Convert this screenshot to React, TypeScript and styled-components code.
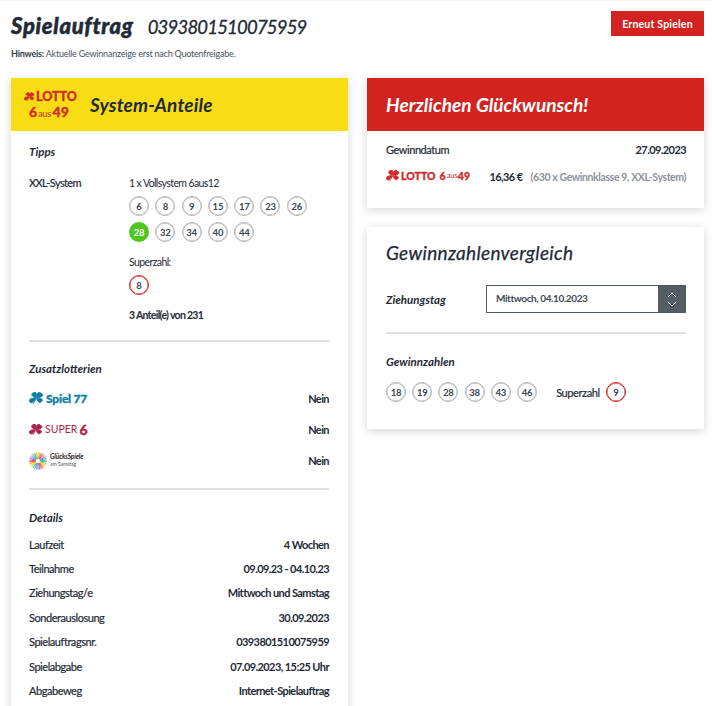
import React from "react";
import styled, { createGlobalStyle } from "styled-components";

const Global = createGlobalStyle`
  html, body { margin: 0; padding: 0; height: 706px; overflow: hidden; background: #fff; }
  body { font-family: "Lato", "Open Sans", sans-serif; color: #1f2a36; font-size: 11px; }
`;

const Page = styled.div`
  padding: 11px 8px 0 11px;
  box-shadow: inset 0 2px 2px -1px rgba(0, 0, 0, 0.05);
  height: 706px;
  box-sizing: border-box;
`;
const TopBar = styled.div`
  display: flex;
  justify-content: space-between;
  align-items: flex-start;
  height: 34px;
`;
const Title = styled.h1`
  margin: 0;
  font-size: 20px;
  line-height: 29px;
  font-style: italic;
  font-weight: 400;
  display: flex;
  gap: 14px;
  align-items: baseline;
  color: #1f2a36;
`;
const TitleStrong = styled.strong`
  font-weight: 900;
  font-size: 22px;
  letter-spacing: 0.7px;
  -webkit-text-stroke: 0.5px currentColor;
`;
const TitleNumber = styled.span`
  font-size: 18.5px;
  letter-spacing: -0.8px;
  -webkit-text-stroke: 0.3px currentColor;
`;
const RedButton = styled.button`
  width: 93px;
  height: 25px;
  border: 0;
  padding: 0;
  background: #d22320;
  color: #fff;
  font: 700 10.5px "Lato", sans-serif;
  letter-spacing: 0.2px;
`;
const Hint = styled.p`
  margin: 0;
  font-size: 9px;
  letter-spacing: -0.22px;
  line-height: 18px;
  color: #4a5560;
  height: 33px;
  b { font-weight: 700; color: #333e49; }
`;
const Columns = styled.div`
  display: grid;
  grid-template-columns: 337px 337px;
  column-gap: 19px;
  align-items: start;
`;
const Column = styled.div`
  display: flex;
  flex-direction: column;
  gap: 19px;
`;
const Card = styled.section`
  background: #fff;
  box-shadow: 0 2px 9px rgba(0, 0, 0, 0.17);
`;
const Banner = styled.header<{ $bg: string; $fg: string; $left: number }>`
  height: 53px;
  background: ${(p) => p.$bg};
  color: ${(p) => p.$fg};
  display: flex;
  align-items: center;
  padding: 0 19px 0 ${(p) => p.$left}px;
  box-sizing: border-box;
`;
const BannerTitle = styled.h2<{ $gap?: number; $spacing?: number }>`
  margin: 0 0 0 ${(p) => p.$gap ?? 0}px;
  font-size: 19px;
  font-style: italic;
  font-weight: 700;
  letter-spacing: ${(p) => p.$spacing ?? 0}px;
`;
const Body = styled.div<{ $left: number; $right: number; $bottom: number }>`
  padding: 0 ${(p) => p.$right}px ${(p) => p.$bottom}px ${(p) => p.$left}px;
`;
const Sub = styled.h3<{ $top: number; $bottom: number }>`
  margin: ${(p) => p.$top}px 0 ${(p) => p.$bottom}px;
  font-size: 11.5px;
  line-height: 16px;
  font-style: italic;
  font-weight: 700;
`;
const Tip = styled.div`
  display: grid;
  grid-template-columns: 100px 1fr;
`;
const Label = styled.div`
  font-size: 11px;
  line-height: 16px;
  letter-spacing: -0.6px;
  -webkit-text-stroke: 0.2px currentColor;
`;
const Plain = styled.div<{ $top?: number; $bottom?: number }>`
  font-size: 10.5px;
  line-height: 16px;
  letter-spacing: -0.6px;
  margin: ${(p) => p.$top ?? 0}px 0 ${(p) => p.$bottom ?? 0}px;
`;
const Shares = styled.div`
  font-size: 10.5px;
  line-height: 16px;
  letter-spacing: -0.7px;
  font-weight: 700;
  margin-top: 12px;
`;
const BallGrid = styled.div`
  display: grid;
  grid-template-columns: repeat(7, 20px);
  column-gap: 6.3px;
  row-gap: 6px;
`;
const Ball = styled.span<{ $kind?: "red" | "hit" }>`
  width: 20px;
  height: 20px;
  box-sizing: border-box;
  border-radius: 50%;
  display: inline-flex;
  align-items: center;
  justify-content: center;
  font-size: 9.5px;
  font-weight: 700;
  letter-spacing: -0.2px;
  color: ${(p) => (p.$kind === "hit" ? "#fff" : "#3a4550")};
  background: ${(p) => (p.$kind === "hit" ? "#4fc81e" : "#fff")};
  border: ${(p) =>
    p.$kind === "hit" ? "0" : p.$kind === "red" ? "1px solid #d22320" : "1px solid #b4b4b4"};
  box-shadow: ${(p) =>
    p.$kind === "hit"
      ? "none"
      : p.$kind === "red"
        ? "inset 0 0 0 0.4px #d22320"
        : "inset 0 0 0 0.4px #b4b4b4"};
`;
const Divider = styled.hr<{ $top: number; $bottom?: number }>`
  border: 0;
  height: 2px;
  background: #e0e0e0;
  margin: ${(p) => p.$top}px 0 ${(p) => p.$bottom ?? 0}px;
`;
const LotteryRow = styled.div`
  height: 31px;
  display: flex;
  align-items: center;
  justify-content: space-between;
`;
const Strong = styled.span`
  font-weight: 700;
  font-size: 11px;
  letter-spacing: -0.58px;
`;
const Detail = styled.div`
  height: 24.4px;
  display: flex;
  align-items: center;
  justify-content: space-between;
  font-size: 11px;
`;
const DetailLabel = styled.span`
  letter-spacing: -0.45px;
  -webkit-text-stroke: 0.2px currentColor;
`;
const WinRow = styled.div`
  display: flex;
  justify-content: space-between;
  align-items: center;
  margin-top: 10px;
  height: 16px;
`;
const WinAmount = styled.div`
  display: flex;
  align-items: center;
  justify-content: space-between;
  margin-top: 11px;
  height: 16px;
`;
const Grey = styled.span`
  color: #8c929a;
  font-weight: 700;
  font-size: 10.5px;
  letter-spacing: -0.4px;
  margin-left: 8px;
`;
const CompareTitle = styled.h2`
  margin: 0;
  padding-top: 13px;
  font-size: 19px;
  line-height: 26px;
  font-style: italic;
  font-weight: 400;
  letter-spacing: 0.3px;
  -webkit-text-stroke: 0.25px currentColor;
`;
const DayRow = styled.div`
  display: grid;
  grid-template-columns: 100px 200px;
  align-items: center;
  margin-top: 19px;
`;
const DaySub = styled(Sub)`
  padding-top: 2px;
`;
const Select = styled.div`
  height: 28px;
  box-sizing: border-box;
  border: 1px solid #4f5960;
  display: flex;
  align-items: stretch;
  justify-content: space-between;
  font-size: 10px;
  letter-spacing: -0.4px;
  font-weight: 700;
  color: #404a54;
`;
const SelectText = styled.span`
  padding: 0 0 2px 9px;
  display: flex;
  align-items: center;
`;
const SelectBtn = styled.span`
  width: 27px;
  background: #555e64;
  display: flex;
  align-items: center;
  justify-content: center;
`;
const NumbersRow = styled.div`
  display: flex;
  align-items: center;
  gap: 6.2px;
`;
const SuperLabel = styled.span`
  font-size: 11px;
  letter-spacing: -0.4px;
  margin: 0 0 0 13px;
  -webkit-text-stroke: 0.2px currentColor;
`;

const LogoInline = styled.span<{ $color: string }>`
  display: inline-flex;
  align-items: center;
  color: ${(p) => p.$color};
`;
const Word = styled.span<{ $size: number; $weight?: number; $gap?: number; $spacing?: number }>`
  font-size: ${(p) => p.$size}px;
  font-weight: ${(p) => p.$weight ?? 900};
  margin-left: ${(p) => p.$gap ?? 0}px;
  letter-spacing: ${(p) => p.$spacing ?? 0}px;
  line-height: 1;
  -webkit-text-stroke: ${(p) => ((p.$weight ?? 900) === 900 ? "0.3px currentColor" : "0")};
`;
const LottoStack = styled.div`
  width: 53px;
  color: #d22b2b;
  flex: none;
`;
const StackTop = styled.div`
  display: flex;
  align-items: center;
  height: 13px;
`;
const StackBottom = styled.div`
  display: flex;
  align-items: baseline;
  padding-left: 5px;
  line-height: 15px;
  margin-top: 1px;
`;
const GsText = styled.div`
  margin-left: 3px;
  color: #222;
  line-height: 1;
`;
const GsTop = styled.div`
  font-size: 6.5px;
  font-style: italic;
  font-weight: 700;
  letter-spacing: -0.1px;
`;
const GsBottom = styled.div`
  font-size: 5px;
  margin-top: 2px;
  color: #555;
`;

const Clover = ({ w, color }: { w: number; color: string }) => (
  <svg width={w} height={w * 0.85} viewBox="0 0 20 17" fill={color} stroke={color} strokeWidth="1.3" strokeLinejoin="round" aria-hidden="true">
    <path d="M10.2 7.2C9.6 4.6 10.8 1.2 13.2.6c1.6-.4 2.6.5 2.9 1.600 1.500-.1 2.700.9 2.200 2.400-.7 2-4.800 2.900-8.100 2.600Z" />
    <path d="M9.200 7.200C6.400 7 3.600 5.400 3.800 3c.1-1.300 1.300-1.900 2.300-1.800C6.600.1 8 -.3 9 .8c1.300 1.500.8 4.200.2 6.400Z" />
    <path d="M8.700 8.200C6.400 8 2.600 8.300 1 10.200c-1 1.200-.8 2.500.3 3 .3 1 1.700 1.500 2.900.7C6.300 12.600 7.900 10.400 8.700 8.200Z" />
    <path d="M10.400 8.300c3-.3 6.200.1 7.200 1.700.8 1.300-.1 2.400-1.200 2.700-.3 1-1.600 1.600-3 .9-1.800-.9-2.800-3.300-3-5.300Z" />
    <path d="M9.400 7.800 5.200 16l.2.200 4.900-8.200Z" strokeWidth="0.5" />
  </svg>
);

const Sun = () => {
  const colors = ["#f6d51f", "#f7a823", "#f0652f", "#e8437f", "#c75bb0", "#8a7fd0", "#4aa8e0", "#2cb7c0", "#4cbf7a", "#a4cf3c"];
  const rays = Array.from({ length: 30 }, (_, i) => i);
  return (
    <svg width="18" height="18" viewBox="-9 -9 18 18" aria-hidden="true">
      {rays.map((i) => {
        const a = (i / 30) * Math.PI * 2 - Math.PI / 2;
        return (
          <line
            key={i}
            x1={Math.cos(a) * 2.2}
            y1={Math.sin(a) * 2.2}
            x2={Math.cos(a) * 8.8}
            y2={Math.sin(a) * 8.8}
            stroke={colors[i % 10]}
            strokeWidth="1"
          />
        );
      })}
    </svg>
  );
};

const main = [6, 8, 9, 15, 17, 23, 26, 28, 32, 34, 40, 44];
const wins = [18, 19, 28, 38, 43, 46];
const details: [string, string][] = [
  ["Laufzeit", "4 Wochen"],
  ["Teilnahme", "09.09.23 - 04.10.23"],
  ["Ziehungstag/e", "Mittwoch und Samstag"],
  ["Sonderauslosung", "30.09.2023"],
  ["Spielauftragsnr.", "0393801510075959"],
  ["Spielabgabe", "07.09.2023, 15:25 Uhr"],
  ["Abgabeweg", "Internet-Spielauftrag"],
];

export default function App() {
  return (
    <Page>
      <Global />
      <TopBar>
        <Title>
          <TitleStrong>Spielauftrag</TitleStrong>
          <TitleNumber>0393801510075959</TitleNumber>
        </Title>
        <RedButton>Erneut Spielen</RedButton>
      </TopBar>
      <Hint>
        <b>Hinweis:</b> Aktuelle Gewinnanzeige erst nach Quotenfreigabe.
      </Hint>
      <Columns>
        <Column>
          <Card>
            <Banner $bg="#f8dd14" $fg="#1f2a36" $left={13}>
              <LottoStack>
                <StackTop>
                  <Clover w={14} color="#d22b2b" />
                  <Word $size={12.5} $gap={1}>LOTTO</Word>
                </StackTop>
                <StackBottom>
                  <Word $size={14}>6</Word>
                  <Word $size={9} $weight={400} $gap={1}>aus</Word>
                  <Word $size={14} $gap={1}>49</Word>
                </StackBottom>
              </LottoStack>
              <BannerTitle $gap={13} $spacing={0.15}>System-Anteile</BannerTitle>
            </Banner>
            <Body $left={18} $right={19} $bottom={40}>
              <Sub $top={13} $bottom={15}>Tipps</Sub>
              <Tip>
                <Label>XXL-System</Label>
                <div>
                  <Plain $bottom={5}>1 x Vollsystem 6aus12</Plain>
                  <BallGrid>
                    {main.map((n) => (
                      <Ball key={n} $kind={n === 28 ? "hit" : undefined}>{n}</Ball>
                    ))}
                  </BallGrid>
                  <Plain $top={12} $bottom={5}>Superzahl:</Plain>
                  <Ball $kind="red">8</Ball>
                  <Shares>3 Anteil(e) von 231</Shares>
                </div>
              </Tip>
              <Divider $top={17} />
              <Sub $top={19} $bottom={6}>Zusatzlotterien</Sub>
              <LotteryRow>
                <LogoInline $color="#0e7fa3">
                  <Clover w={15} color="#0e7fa3" />
                  <Word $size={12} $gap={2} $spacing={-0.2}>Spiel 77</Word>
                </LogoInline>
                <Strong>Nein</Strong>
              </LotteryRow>
              <LotteryRow>
                <LogoInline $color="#b01e4b">
                  <Clover w={14} color="#b01e4b" />
                  <Word $size={10.5} $weight={400} $gap={2}>SUPER</Word>
                  <Word $size={14} $gap={2}>6</Word>
                </LogoInline>
                <Strong>Nein</Strong>
              </LotteryRow>
              <LotteryRow>
                <LogoInline $color="#222">
                  <Sun />
                  <GsText>
                    <GsTop>GlücksSpiele</GsTop>
                    <GsBottom>am Samstag</GsBottom>
                  </GsText>
                </LogoInline>
                <Strong>Nein</Strong>
              </LotteryRow>
              <Divider $top={12} />
              <Sub $top={20} $bottom={6}>Details</Sub>
              {details.map(([k, v]) => (
                <Detail key={k}>
                  <DetailLabel>{k}</DetailLabel>
                  <Strong>{v}</Strong>
                </Detail>
              ))}
            </Body>
          </Card>
        </Column>
        <Column>
          <Card>
            <Banner $bg="#d22320" $fg="#fff" $left={19}>
              <BannerTitle $spacing={0.05}>Herzlichen Glückwunsch!</BannerTitle>
            </Banner>
            <Body $left={19} $right={18} $bottom={24}>
              <WinRow>
                <DetailLabel>Gewinndatum</DetailLabel>
                <Strong>27.09.2023</Strong>
              </WinRow>
              <WinAmount>
                <LogoInline $color="#d22b2b">
                  <Clover w={14} color="#d22b2b" />
                  <Word $size={10.5} $gap={1}>LOTTO</Word>
                  <Word $size={10.5} $gap={4}>6</Word>
                  <Word $size={7.5} $weight={400} $gap={1}>aus</Word>
                  <Word $size={10.5}>49</Word>
                </LogoInline>
                <span>
                  <Strong>16,36 €</Strong>
                  <Grey>(630 x Gewinnklasse 9, XXL-System)</Grey>
                </span>
              </WinAmount>
            </Body>
          </Card>
          <Card>
            <Body $left={19} $right={18} $bottom={27}>
              <CompareTitle>Gewinnzahlenvergleich</CompareTitle>
              <DayRow>
                <DaySub $top={0} $bottom={0}>Ziehungstag</DaySub>
                <Select>
                  <SelectText>Mittwoch, 04.10.2023</SelectText>
                  <SelectBtn>
                    <svg width="10" height="15" viewBox="0 0 10 15" fill="none" stroke="#fff" strokeWidth="1" aria-hidden="true">
                      <path d="M1 5 5 1l4 4M1 10l4 4 4-4" />
                    </svg>
                  </SelectBtn>
                </Select>
              </DayRow>
              <Divider $top={19} />
              <Sub $top={20} $bottom={12}>Gewinnzahlen</Sub>
              <NumbersRow>
                {wins.map((n) => (
                  <Ball key={n}>{n}</Ball>
                ))}
                <SuperLabel>Superzahl</SuperLabel>
                <Ball $kind="red">9</Ball>
              </NumbersRow>
            </Body>
          </Card>
        </Column>
      </Columns>
    </Page>
  );
}
